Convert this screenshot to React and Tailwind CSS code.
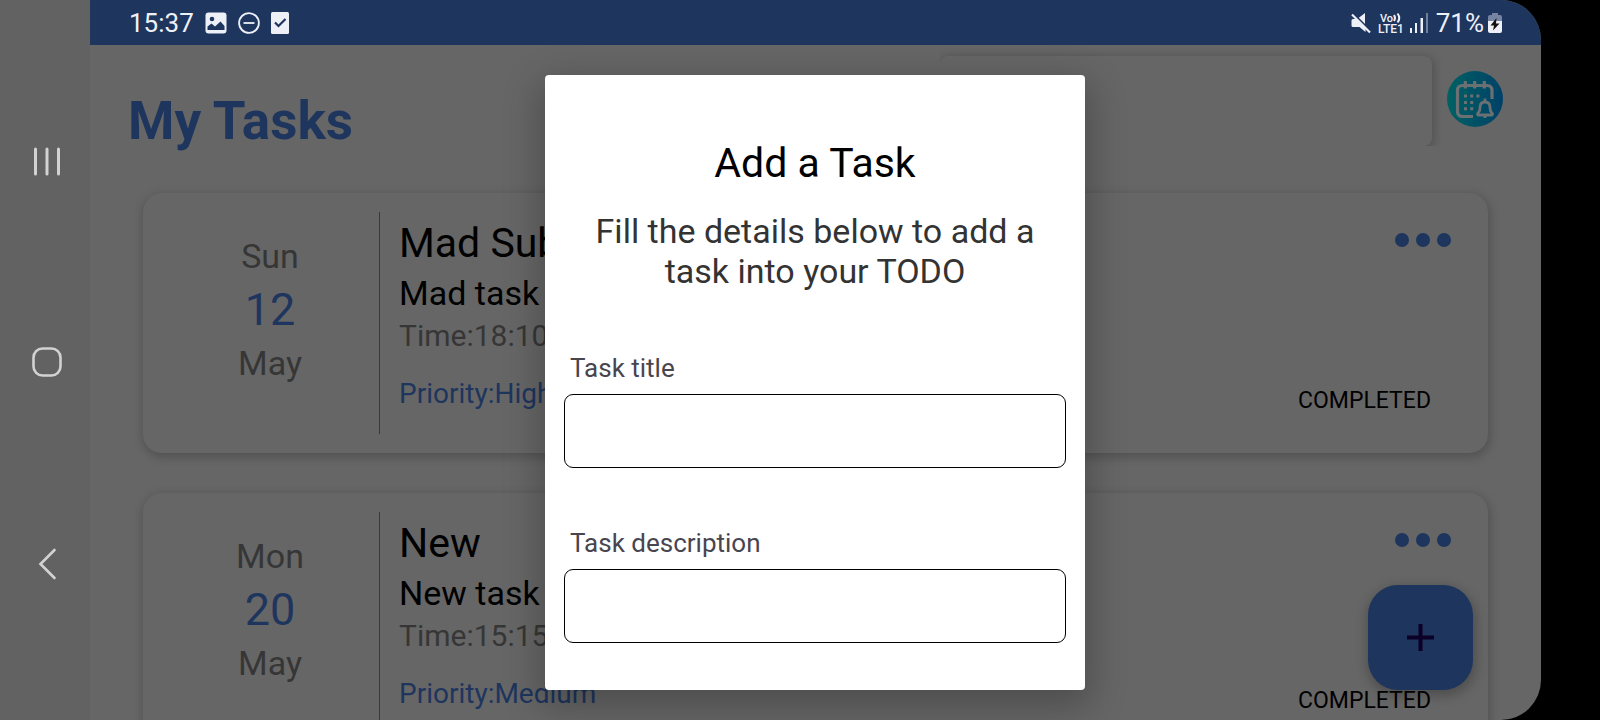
import React from "react";

const tasks = [
  { day: "Sun", date: "12", month: "May", title: "Mad Sub", text: "Mad task", time: "18:10", priority: "High" },
  { day: "Mon", date: "20", month: "May", title: "New", text: "New task", time: "15:15", priority: "Medium" },
];

function SystemNav() {
  return (
    <nav aria-label="System" className="flex w-[90px] shrink-0 flex-col items-center justify-between bg-[#626262] pt-[144px] pb-[140px] pl-[3px]">
      <button type="button" aria-label="Recent apps">
        <svg className="block" width="32" height="34" viewBox="0 0 32 34" fill="none" stroke="#d2d2d2" strokeWidth="3" strokeLinecap="round">
          <path d="M4.500 5v25M16 5v25M27.500 5v25" />
        </svg>
      </button>
      <button type="button" aria-label="Home">
        <svg className="block" width="32" height="32" viewBox="0 0 32 32" fill="none" stroke="#d2d2d2" strokeWidth="2.600">
          <rect x="2.500" y="2.500" width="27" height="27" rx="9" />
        </svg>
      </button>
      <button type="button" aria-label="Back">
        <svg className="block" width="32" height="34" viewBox="0 0 32 34" fill="none" stroke="#d2d2d2" strokeWidth="2.600" strokeLinecap="round">
          <path d="M23.500 4 9.500 18l14 14" />
        </svg>
      </button>
    </nav>
  );
}

function StatusBar() {
  return (
    <header className="flex h-[45px] shrink-0 items-center justify-between bg-[#1e355e] pr-[39px] pl-[39px] text-[26px] leading-[30px] text-[#eef0f8]">
      <div className="flex items-center gap-[11px]">
        <span>15:37</span>
        <svg width="22" height="22" viewBox="0 0 22 22">
          <rect x="0.500" y="0.500" width="21" height="21" rx="3" fill="#eef0f8" />
          <circle cx="7" cy="7" r="2.300" fill="#1e355e" />
          <path d="M2.500 18v-3.500l4-3 3.500 3 5.500-5 4 4.500v4z" fill="#1e355e" />
        </svg>
        <svg width="22" height="22" viewBox="0 0 22 22" fill="none" stroke="#eef0f8" strokeWidth="1.800">
          <circle cx="11" cy="11" r="9.900" />
          <path d="M5.500 11h11" />
        </svg>
        <svg width="18" height="22" viewBox="0 0 18 22">
          <rect width="18" height="22" rx="1.500" fill="#eef0f8" />
          <path d="m4 10.500 3.500 3.500 7-7" fill="none" stroke="#1e355e" strokeWidth="2.200" />
        </svg>
      </div>
      <div className="flex items-center gap-[6px]">
        <svg width="22" height="22" viewBox="0 0 22 22" fill="#eef0f8">
          <path d="M1.500 8.500q0-1.500 1.500-1.500h4.500L15.500 15v5L9.500 15H3q-1.500 0-1.500-1.500zM8.500 6l6.500-5v11.500z" />
          <path d="M3.500 1.500l17 17" stroke="#1e355e" strokeWidth="1.500" />
          <path d="M2 2.500l18 18" stroke="#eef0f8" strokeWidth="2.200" />
        </svg>
        <svg width="26" height="24" viewBox="0 0 26 24" fill="#eef0f8" fontFamily="Roboto, sans-serif" fontWeight="500">
          <text x="2" y="11" fontSize="11">Vo</text>
          <path d="M16 4q2 3 0 6M19.500 2.500q3.500 4.500 0 9" fill="none" stroke="#eef0f8" strokeWidth="2" />
          <text x="0" y="22" fontSize="12">LTE1</text>
        </svg>
        <svg width="20" height="22" viewBox="0 0 20 22" fill="#eef0f8">
          <path d="M0 16h2v5H0zM5 11h2v10H5zM10.500 6h2.500v15h-2.500z" />
          <path d="M16 1h2v20h-2z" opacity=".4" />
        </svg>
        <div className="flex items-center gap-1">
          <span>71%</span>
          <svg width="14" height="20" viewBox="0 0 14 20">
            <path d="M4 0h6v2h2q2 0 2 2v4H0V4q0-2 2-2h2z" fill="#7684a3" />
            <path d="M0 8h14v10q0 2-2 2H2q-2 0-2-2z" fill="#eef0f8" />
            <path d="M8.500 5 2.500 12.500h3.500l-1 5 6.500-7H8z" fill="#111" />
          </svg>
        </div>
      </div>
    </header>
  );
}

function CalendarIcon() {
  return (
    <svg className="block" width="56" height="56" viewBox="0 0 56 56" fill="none">
      <defs>
        <linearGradient id="calendar-fill" x1="0" y1="0" x2="1" y2="0">
          <stop offset="0" stopColor="#006163" />
          <stop offset="1" stopColor="#004168" />
        </linearGradient>
      </defs>
      <circle cx="28" cy="28" r="28" fill="url(#calendar-fill)" />
      <g stroke="#6b7073" strokeWidth="3.200">
        <path d="M26 45.500H15.500q-5 0-5-5v-21q0-5 5-5H40q5 0 5 5V28" />
        <path d="M18.300 10v7.500M27.700 10v7.500M37.300 10v7.500" />
        <path d="M31 44q-1-1 .5-2.500 1.500-2 1.500-5 0-5.500 5-5.500t5 5.500q0 3 1.500 5 1.500 1.500.5 2.500zM38 27.500V31M38 44v3" strokeWidth="2.800" strokeLinejoin="round" />
      </g>
      <path fill="#6b7073" d="M17 23.500h3v3h-3zM23.200 23.500h3v3h-3zM29.400 23.500h3v3h-3zM17 30h3v3h-3zM23.200 30h3v3h-3zM17 36.300h3v3h-3zM23.200 36.300h3v3h-3z" />
    </svg>
  );
}

function TaskCard({ task }) {
  return (
    <article className="flex h-[260px] shrink-0 rounded-[19px] bg-[#666] py-[19px] shadow-[1px_3px_10px_2px_rgba(0,0,0,0.18)]">
      <div className="flex w-[237px] shrink-0 flex-col items-center border-r border-[#3a3a3a] pt-[24px] pl-[18px] text-[34px] leading-[40px] text-[#363636]">
        <span>{task.day}</span>
        <span className="py-[3px] text-[45px] leading-[61px] text-[#1e355e]">{task.date}</span>
        <span>{task.month}</span>
      </div>
      <div className="flex min-w-0 grow flex-col pl-[19px]">
        <h2 className="pt-[6px] text-[41px] leading-[50px] text-black">{task.title}</h2>
        <p className="text-[34px] leading-[50px] text-black">{task.text}</p>
        <p className="text-[30px] leading-[36px] text-[#363636]">Time:{task.time}</p>
        <p className="pt-[22px] text-[28px] leading-[36px] text-[#1e355e]">Priority:{task.priority}</p>
      </div>
      <div className="flex shrink-0 flex-col items-end justify-between pt-[21px] pr-[37px] pb-[20px]">
        <button type="button" aria-label="Task options">
          <svg className="block" width="56" height="14" viewBox="0 0 56 14" fill="#1e355e">
            <circle cx="7" cy="7" r="7" />
            <circle cx="28" cy="7" r="7" />
            <circle cx="49" cy="7" r="7" />
          </svg>
        </button>
        <span className="pr-[20px] text-[23px] leading-[26px] text-black">COMPLETED</span>
      </div>
    </article>
  );
}

function Field({ id, label }) {
  return (
    <div className="flex flex-col gap-2">
      <label htmlFor={id} className="pl-[6px] text-[26px] leading-[36px] text-[#49454f]">{label}</label>
      <input id={id} type="text" className="h-[74px] w-full rounded-[9px] border border-black bg-white px-4 text-[26px] outline-none" />
    </div>
  );
}

export default function App() {
  return (
    <div className="flex h-screen overflow-hidden bg-black font-[Roboto,sans-serif]">
      <SystemNav />
      <div className="relative mr-[59px] flex min-w-0 grow flex-col overflow-hidden rounded-r-[40px] bg-[#666]">
        <StatusBar />
        <main className="flex min-h-0 grow flex-col">
          <div className="flex h-[100px] shrink-0 items-start justify-between pr-[38px] pl-[38px]">
            <h1 className="pt-[44px] text-[53px] leading-[64px] font-bold text-[#1e355e]">My Tasks</h1>
            <div className="flex items-start">
              <div className="w-[507px] overflow-hidden pt-[11px] pr-[15px]">
                <div className="h-[90px] rounded-lg bg-[#666] shadow-[1px_2px_9px_2px_rgba(0,0,0,0.18)]" />
              </div>
              <button type="button" aria-label="Calendar" className="pt-[26px]">
                <CalendarIcon />
              </button>
            </div>
          </div>
          <div className="flex flex-col gap-[40px] pt-[48px] pr-[53px] pl-[53px]">
            {tasks.map((t) => (
              <TaskCard key={t.day} task={t} />
            ))}
          </div>
        </main>
        <button type="button" aria-label="Add task" className="absolute right-[68px] bottom-[30px] flex size-[105px] items-center justify-center rounded-[30px] bg-[#1e355e] shadow-[1px_4px_12px_2px_rgba(0,0,0,0.24)]">
          <svg width="27" height="27" viewBox="0 0 27 27" stroke="#0d0028" strokeWidth="4">
            <path d="M0 13.500h27M13.500 0v27" />
          </svg>
        </button>
      </div>
      <div className="pointer-events-none absolute inset-0 flex items-center justify-center pt-[45px] pl-[30px]">
        <section role="dialog" aria-label="Add a Task" className="pointer-events-auto h-[615px] w-[540px] overflow-hidden rounded-[4px] bg-white px-[19px] pt-[64px] shadow-[0_12px_36px_6px_rgba(0,0,0,0.24)]">
          <h2 className="text-center text-[41px] leading-[48px] text-black">Add a Task</h2>
          <p className="px-3 pt-[24px] text-center text-[34px] leading-[40px] text-[#333]">
            Fill the details below to add a task into your TODO
          </p>
          <form className="flex flex-col gap-[57px] pt-[59px]">
            <Field id="task-title" label="Task title" />
            <Field id="task-description" label="Task description" />
          </form>
        </section>
      </div>
    </div>
  );
}
